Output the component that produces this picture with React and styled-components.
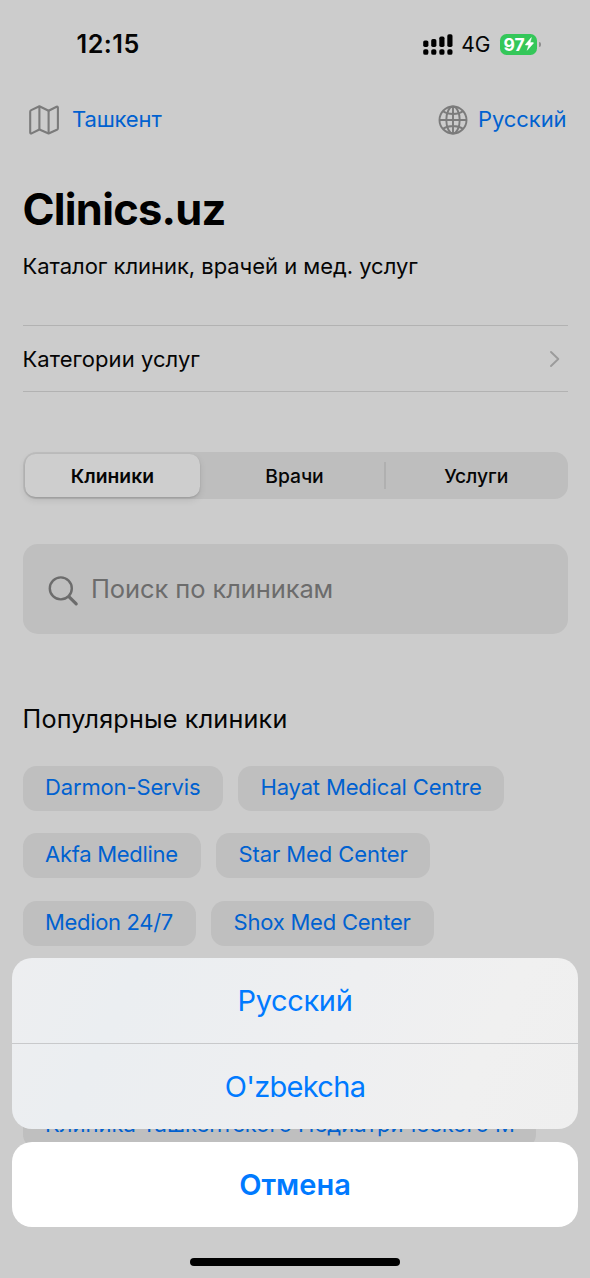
import { useState } from 'react';
import styled, { createGlobalStyle } from 'styled-components';

const TABS = [
  { id: 'clinics', label: 'Клиники', spacing: 0 },
  { id: 'doctors', label: 'Врачи', spacing: -0.05 },
  { id: 'services', label: 'Услуги', spacing: -0.06 },
];

const CLINIC_ROWS = [
  [
    { name: 'Darmon-Servis', width: 200, spacing: -0.14 },
    { name: 'Hayat Medical Centre', width: 266, spacing: -0.16 },
  ],
  [
    { name: 'Akfa Medline', width: 178, spacing: -0.29 },
    { name: 'Star Med Center', width: 214, spacing: -0.09 },
  ],
  [
    { name: 'Medion 24/7', width: 173, spacing: -0.33 },
    { name: 'Shox Med Center', width: 222.5, spacing: -0.22 },
  ],
];

const SignalIcon = () => (
  <svg width="30" height="21" viewBox="0 0 30 21">
    <rect x="0.2" y="6.4" width="5.2" height="6.6" rx="1.7" />
    <rect x="8.2" y="5" width="5.2" height="8" rx="1.7" />
    <rect x="16.3" y="2.6" width="5.2" height="10.4" rx="1.7" />
    <rect x="24.3" y="0.2" width="5.2" height="12.8" rx="1.7" />
    <rect x="0.2" y="15.2" width="5.2" height="5.6" rx="1.9" />
    <rect x="8.2" y="15.2" width="5.2" height="5.6" rx="1.9" />
    <rect x="16.3" y="15.2" width="5.2" height="5.6" rx="1.9" />
    <rect x="24.3" y="15.2" width="5.2" height="5.6" rx="1.9" />
  </svg>
);

const BoltIcon = () => (
  <svg width="9" height="14" viewBox="0 0 9 14" fill="#fff" stroke="#fff" strokeWidth="0.5" strokeLinejoin="round">
    <path d="M6.4 0.6 L0.4 7.6 Q0.2 8.1 0.8 8.1 H3.7 L2.2 13.3 L8.4 6.2 Q8.6 5.6 8 5.6 H5.1 Z" />
  </svg>
);

const MapIcon = () => (
  <svg width="32" height="32" viewBox="0 0 32 32" fill="none" stroke="#7b7b7b" strokeWidth="2.1" strokeLinejoin="round">
    <path d="M2.2 7.8 Q2.2 6.6 3.2 6.1 L11.4 2.3 L20.6 6.8 L28.6 2.8 Q29.9 2.3 29.9 3.7 V24.2 Q29.9 25.3 28.9 25.8 L20.6 29.5 L11.4 25.5 L3.6 29.4 Q2.2 29.9 2.2 28.5 Z" />
    <path d="M11.4 2.3 V25.5 M20.6 6.8 V29.5" />
  </svg>
);

const GlobeIcon = () => (
  <svg width="30" height="30" viewBox="0 0 30 30" fill="none" stroke="#7b7b7b" strokeWidth="1.9">
    <circle cx="15" cy="15" r="13.5" />
    <ellipse cx="15" cy="15" rx="6.7" ry="13.5" />
    <path d="M15 1.5 V28.5 M1.5 15 H28.5 M4.9 6.2 Q9 9 15 9 T25.1 6.2 M4.9 23.8 Q9 21 15 21 T25.1 23.8" />
  </svg>
);

const ChevronIcon = () => (
  <svg width="12" height="18" viewBox="0 0 12 18" fill="none" stroke="#9b9b9b" strokeWidth="1.9" strokeLinecap="round" strokeLinejoin="round">
    <path d="M2 2 L9.3 9 L2 16" />
  </svg>
);

const SearchIcon = () => (
  <svg width="32" height="32" viewBox="0 0 32 32" fill="none" stroke="#6c6c6c" strokeLinecap="round">
    <circle cx="12.8" cy="13.4" r="11" strokeWidth="2.4" />
    <path d="M21.1 21.8 L28.2 28.9" strokeWidth="3.2" />
  </svg>
);

const App = () => {
  const [tab, setTab] = useState('clinics');

  return (
    <Screen>
      <GlobalStyle />
      <StatusBar>
        <Clock>12:15</Clock>
        <StatusIcons>
          <SignalIcon />
          <Network>4G</Network>
          <Battery>
            <BatteryLevel>97<BoltIcon /></BatteryLevel>
            <BatteryCap />
          </Battery>
        </StatusIcons>
      </StatusBar>

      <TopBar>
        <TopLink $spacing={-0.15} $gap={12.5}>
          <MapIcon />
          <span>Ташкент</span>
        </TopLink>
        <TopLink $spacing={-0.09} $gap={10.5}>
          <GlobeIcon />
          <span>Русский</span>
        </TopLink>
      </TopBar>

      <Title>Clinics.uz</Title>
      <Subtitle>Каталог клиник, врачей и мед. услуг</Subtitle>

      <CategoryRow>
        Категории услуг
        <ChevronIcon />
      </CategoryRow>

      <Tabs>
        {TABS.map(({ id, label, spacing }) => (
          <Tab
            key={id}
            $active={tab === id}
            $divided={id === 'services' && tab === 'clinics'}
            $spacing={spacing}
            onClick={() => setTab(id)}
          >
            {label}
          </Tab>
        ))}
      </Tabs>

      <SearchBox>
        <SearchIcon />
        <span>Поиск по клиникам</span>
      </SearchBox>

      <SectionTitle>Популярные клиники</SectionTitle>
      <Chips>
        {CLINIC_ROWS.map((row, index) => (
          <ChipRow key={index}>
            {row.map(({ name, width, spacing }) => (
              <Chip key={name} $width={width} $spacing={spacing}>{name}</Chip>
            ))}
          </ChipRow>
        ))}
        <CoveredRows />
        <ChipRow>
          <Chip $width={513.5} $spacing={0.01}>Клиника Ташкентского Педиатрического М</Chip>
        </ChipRow>
      </Chips>

      <ActionSheet>
        <Options>
          <Option $spacing={-0.35}>Русский</Option>
          <Option $spacing={-0.69}>O'zbekcha</Option>
        </Options>
        <Cancel>Отмена</Cancel>
        <HomeIndicator />
      </ActionSheet>
    </Screen>
  );
}

export default App;

const GlobalStyle = createGlobalStyle`
  body {
    margin: 0;
    background: #ccc;
    font-family: Inter, 'Liberation Sans', sans-serif;
  }

  * {
    box-sizing: border-box;
  }

  button {
    border: 0;
    padding: 0;
    background: none;
    font-family: inherit;
  }

  svg {
    display: block;
    flex: none;
  }
`;

const Screen = styled.div`
  position: relative;
  width: 590px;
  height: 1278px;
  overflow: hidden;
  padding: 0 22.5px;
  background: #ccc;
  color: #050505;
`;

const StatusBar = styled.div`
  display: flex;
  justify-content: space-between;
  align-items: center;
  height: 88px;
  padding: 0 27px 0 54px;
`;

const Clock = styled.div`
  font-size: 25.2px;
  font-weight: 600;
  letter-spacing: .5px;
`;

const StatusIcons = styled.div`
  display: flex;
  align-items: center;
`;

const Network = styled.div`
  margin: 1px 9px 0 8.5px;
  font-size: 21px;
`;

const Battery = styled.div`
  display: flex;
  align-items: center;
  gap: 2px;
`;

const BatteryLevel = styled.div`
  display: flex;
  align-items: center;
  gap: .5px;
  width: 37.5px;
  height: 21px;
  padding-left: 4px;
  border-radius: 6.5px;
  background: #34c759;
  color: #fff;
  font-size: 17.5px;
  font-weight: 700;
`;

const BatteryCap = styled.div`
  width: 1.5px;
  height: 5px;
  border-radius: 0 2px 2px 0;
  background: #8d8d8d;
`;

const TopBar = styled.div`
  display: flex;
  justify-content: space-between;
  align-items: center;
  height: 64px;
  padding: 0 1px 0 5px;
`;

const TopLink = styled.div`
  display: flex;
  align-items: center;
  gap: ${props => props.$gap}px;
  color: #0061d0;
  font-size: 22px;
  letter-spacing: ${props => props.$spacing}px;

  span {
    margin-top: -3px;
  }
`;

const Title = styled.h1`
  margin: 31px 0 0;
  font-size: 43.4px;
  font-weight: 700;
  line-height: 52px;
  letter-spacing: -.75px;
  color: #000;
`;

const Subtitle = styled.div`
  margin-top: 16px;
  font-size: 22px;
  line-height: 30px;
  letter-spacing: -.04px;
`;

const CategoryRow = styled.div`
  display: flex;
  justify-content: space-between;
  align-items: center;
  height: 67px;
  margin-top: 44px;
  padding-right: 7px;
  border: solid #b2b2b2;
  border-width: 1px 0;
  font-size: 22px;
  letter-spacing: .05px;
`;

const Tabs = styled.div`
  display: grid;
  grid-template-columns: repeat(3, 1fr);
  height: 47.5px;
  margin-top: 59.7px;
  border-radius: 13.5px;
  background: #bebebe;
`;

const Tab = styled.button`
  position: relative;
  margin: ${props => props.$active ? '2.5px 4.5px 2.5px 2.5px' : '2.5px 1px 2.5px 0'};
  padding-top: 1px;
  border-radius: 10.5px;
  background: ${props => props.$active ? '#cecece' : 'none'};
  box-shadow: ${props => props.$active ? '0 3px 7px rgba(0, 0, 0, .1), 0 1px 2px rgba(0, 0, 0, .12)' : 'none'};
  color: #050505;
  font-size: 19.3px;
  font-weight: ${props => props.$active ? 600 : 500};
  letter-spacing: ${props => props.$spacing}px;

  &::before {
    content: '';
    position: absolute;
    display: ${props => props.$divided ? 'block' : 'none'};
    top: 8px;
    bottom: 8px;
    left: -1.5px;
    width: 1.5px;
    background: #b0b0b0;
  }
`;

const SearchBox = styled.div`
  display: flex;
  align-items: center;
  gap: 11.5px;
  height: 90px;
  margin-top: 45px;
  padding-left: 25px;
  border-radius: 15px;
  background: #bfbfbf;
  color: #6c6c6c;
  font-size: 25.5px;
  letter-spacing: -.1px;

  svg {
    margin-top: 4px;
  }

  span {
    margin-top: -1px;
  }
`;

const SectionTitle = styled.div`
  margin-top: 68.8px;
  font-size: 25.2px;
  line-height: 32px;
  letter-spacing: .18px;
`;

const Chips = styled.div`
  display: flex;
  flex-direction: column;
  gap: 22.5px;
  margin-top: 31px;
`;

const ChipRow = styled.div`
  display: flex;
  gap: 15.5px;
`;

const Chip = styled.div`
  width: ${props => props.$width}px;
  height: 45px;
  padding-left: 22.5px;
  border-radius: 13.5px;
  background: #bfbfbf;
  color: #0061d0;
  font-size: 22px;
  line-height: 42px;
  letter-spacing: ${props => props.$spacing}px;
  white-space: nowrap;
`;

// Rows that stay behind the action sheet
const CoveredRows = styled.div`
  height: 112.5px;
`;

const ActionSheet = styled.div`
  position: absolute;
  left: 12px;
  right: 12px;
  bottom: 12px;
  display: flex;
  flex-direction: column;
`;

const Options = styled.div`
  overflow: hidden;
  border-radius: 20px;
  background: linear-gradient(115deg, #edeef0 0%, #ebeef1 20%, #eeeff1 55%, #f0f0f0 80%, #efefef 100%);
`;

const Option = styled.button`
  display: block;
  width: 100%;
  height: 85px;
  color: #007aff;
  font-size: 29px;
  letter-spacing: ${props => props.$spacing}px;

  & + & {
    height: 86px;
    border-top: 1px solid #c8c9cb;
  }
`;

const Cancel = styled.button`
  height: 85px;
  margin-top: 13px;
  border-radius: 20px;
  background: #fff;
  color: #007aff;
  font-size: 29px;
  font-weight: 600;
  letter-spacing: 0;
`;

const HomeIndicator = styled.div`
  align-self: center;
  width: 210px;
  height: 8px;
  margin-top: 31px;
  border-radius: 4px;
  background: #000;
`;
